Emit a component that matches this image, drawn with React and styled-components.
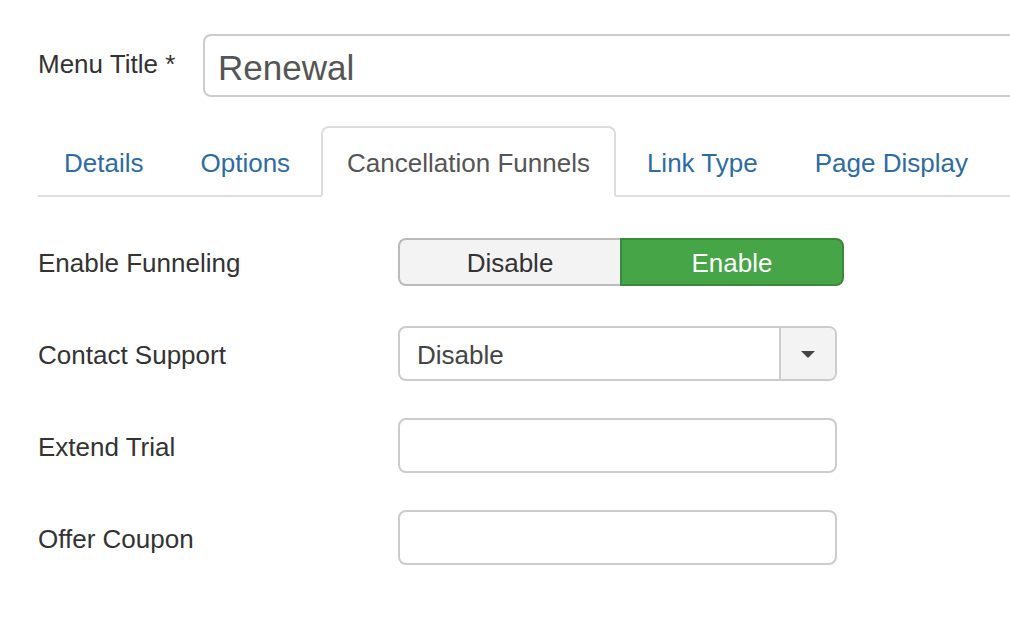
import styled, { createGlobalStyle } from "styled-components";

const GlobalStyle = createGlobalStyle`
  html, body {
    margin: 0;
    padding: 0;
    background: #fff;
    overflow: hidden;
  }
  body {
    font-family: "Liberation Sans", Arial, sans-serif;
    color: #333;
  }
  * { box-sizing: border-box; }
`;

const Page = styled.div`
  width: 1010px;
  height: 624px;
  padding: 34px 0 0 38px;
  overflow: hidden;
`;

const TitleRow = styled.div`
  display: flex;
  align-items: center;
  width: 1100px;
`;

const TitleLabel = styled.label`
  width: 165px;
  flex-shrink: 0;
  font-size: 26px;
  color: #333;
  padding-bottom: 2px;
`;

const TitleInput = styled.div`
  flex: 1;
  height: 63px;
  border: 2px solid #ccc;
  border-radius: 8px;
  display: flex;
  align-items: center;
  padding: 4px 0 0 13px;
  font-size: 35px;
  color: #555;
`;

const TabList = styled.ul`
  display: flex;
  list-style: none;
  margin: 29px 0 0;
  padding: 0;
  width: 1000px;
  border-bottom: 2px solid #ddd;
`;

const Tab = styled.li`
  height: 71px;
  margin: 0 5px -2px 0;
  padding: 4px 24px 0;
  display: flex;
  align-items: center;
  font-size: 26px;
  border: 2px solid ${(p) => (p.$active ? "#ddd" : "transparent")};
  border-bottom-color: ${(p) => (p.$active ? "#fff" : "transparent")};
  border-radius: 8px 8px 0 0;
  background: ${(p) => (p.$active ? "#fff" : "transparent")};
  color: ${(p) => (p.$active ? "#555" : "#2d6ca2")};
  white-space: nowrap;
`;

const Fields = styled.div`
  display: flex;
  flex-direction: column;
  gap: 37px;
  padding-top: 37px;
`;

const Row = styled.div`
  display: flex;
  align-items: center;
  height: 55px;
`;

const Label = styled.label`
  width: 360px;
  flex-shrink: 0;
  font-size: 26px;
  color: #333;
  padding-top: 3px;
`;

const Toggle = styled.div`
  display: flex;
  width: 446px;
  height: 48px;
`;

const ToggleButton = styled.div`
  flex: 1;
  display: flex;
  align-items: center;
  justify-content: center;
  padding-top: 3px;
  font-size: 26px;
  border: 2px solid ${(p) => (p.$on ? "#3b8a3b" : "#bbb")};
  background: ${(p) => (p.$on ? "#46a546" : "#f3f3f3")};
  color: ${(p) => (p.$on ? "#fff" : "#333")};
  border-radius: ${(p) => (p.$on ? "0 8px 8px 0" : "8px 0 0 8px")};
  ${(p) => (p.$on ? "" : "border-right: none;")}
`;

const Select = styled.div`
  width: 439px;
  height: 55px;
  border: 2px solid #ccc;
  border-radius: 8px;
  display: flex;
  overflow: hidden;
`;

const SelectValue = styled.div`
  flex: 1;
  display: flex;
  align-items: center;
  padding: 3px 0 0 17px;
  font-size: 26px;
  color: #444;
`;

const SelectArrow = styled.div`
  width: 56px;
  border-left: 2px solid #ccc;
  background: #f3f3f3;
  display: flex;
  align-items: center;
  justify-content: center;

  &::after {
    content: "";
    margin-top: 2px;
    border-left: 7px solid transparent;
    border-right: 7px solid transparent;
    border-top: 7px solid #444;
  }
`;

const TextInput = styled.div`
  width: 439px;
  height: 55px;
  border: 2px solid #ccc;
  border-radius: 8px;
  background: #fff;
`;

export default function App() {
  const tabs = ["Details", "Options", "Cancellation Funnels", "Link Type", "Page Display"];

  return (
    <>
      <GlobalStyle />
      <Page>
        <TitleRow>
          <TitleLabel>Menu Title *</TitleLabel>
          <TitleInput>Renewal</TitleInput>
        </TitleRow>

        <TabList>
          {tabs.map((t) => (
            <Tab key={t} $active={t === "Cancellation Funnels"}>{t}</Tab>
          ))}
        </TabList>

        <Fields>
          <Row>
            <Label>Enable Funneling</Label>
            <Toggle>
              <ToggleButton>Disable</ToggleButton>
              <ToggleButton $on>Enable</ToggleButton>
            </Toggle>
          </Row>
          <Row>
            <Label>Contact Support</Label>
            <Select>
              <SelectValue>Disable</SelectValue>
              <SelectArrow />
            </Select>
          </Row>
          <Row>
            <Label>Extend Trial</Label>
            <TextInput />
          </Row>
          <Row>
            <Label>Offer Coupon</Label>
            <TextInput />
          </Row>
        </Fields>
      </Page>
    </>
  );
}
